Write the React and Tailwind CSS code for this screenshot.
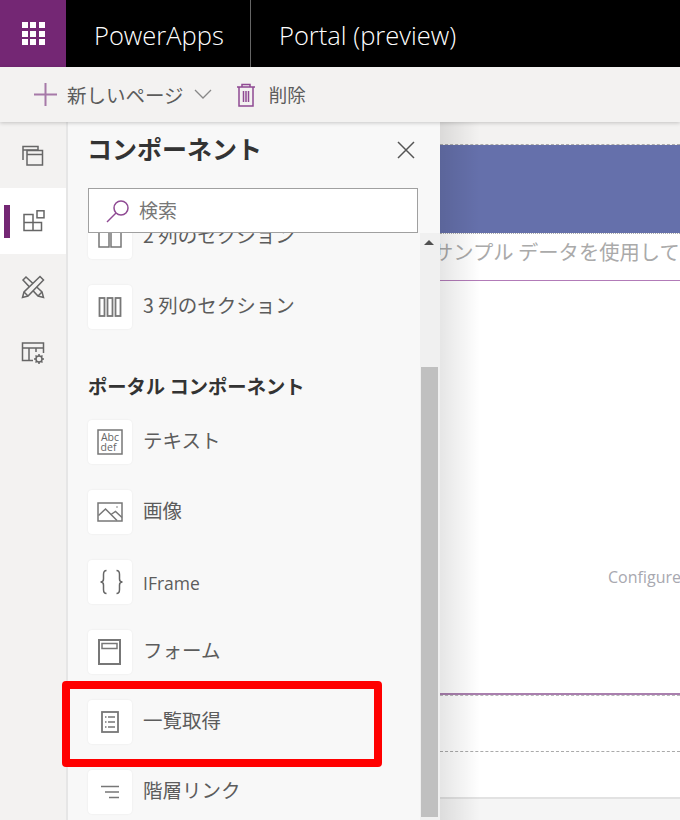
import React from "react";

const jp = "font-['Noto_Sans_CJK_JP','Noto_Sans',sans-serif]";

function TwoColIcon() {
  return (
    <svg width="26" height="26" viewBox="0 0 26 26" fill="none" stroke="#777" strokeWidth="1.500">
      <rect x="2" y="3" width="10" height="20" />
      <rect x="14" y="3" width="10" height="20" />
    </svg>
  );
}

function ThreeColIcon() {
  return (
    <svg width="26" height="26" viewBox="0 0 26 26" fill="none" stroke="#777" strokeWidth="1.800">
      <rect x="2.500" y="4" width="5" height="18" />
      <rect x="10.500" y="4" width="5" height="18" />
      <rect x="18.500" y="4" width="5" height="18" />
    </svg>
  );
}

function TextIcon() {
  return (
    <svg width="26" height="26" viewBox="0 0 26 26" fill="none">
      <rect x="1" y="1" width="24" height="24" stroke="#777" strokeWidth="1.500" />
      <text x="13" y="11.500" textAnchor="middle" fontSize="10.500" fill="#666" fontFamily="Open Sans, sans-serif">Abc</text>
      <text x="11.500" y="21.500" textAnchor="middle" fontSize="10.500" fill="#666" fontFamily="Open Sans, sans-serif">def</text>
    </svg>
  );
}

function ImageIcon() {
  return (
    <svg width="26" height="26" viewBox="0 0 26 26" fill="none" stroke="#777" strokeWidth="1.500">
      <rect x="1" y="4" width="24" height="18" />
      <path d="M1.500 16.500 L8.500 10 L20 21.500" />
      <path d="M14 15.500 L18.500 12.500 L25 18.500" />
      <circle cx="20" cy="8" r="0.800" fill="#777" stroke="none" />
    </svg>
  );
}

function BracesIcon() {
  return (
    <svg className="ml-1" width="26" height="26" viewBox="0 0 26 26" fill="none" stroke="#666" strokeWidth="1.500">
      <path d="M7.500 1.500C5 1.500 4.500 3 4.500 5.500V10C4.500 12 3.500 13 1.500 13C3.500 13 4.500 14 4.500 16V20.500C4.500 23 5 24.500 7.500 24.500" />
      <path d="M17.500 1.500C20 1.500 20.500 3 20.500 5.500V10C20.500 12 21.500 13 23.500 13C21.500 13 20.500 14 20.500 16V20.500C20.500 23 20 24.500 17.500 24.500" />
    </svg>
  );
}

function FormIcon() {
  return (
    <svg width="26" height="26" viewBox="0 0 26 26" fill="none" stroke="#777" strokeWidth="1.500">
      <rect x="2" y="1" width="21" height="24" strokeWidth="2" />
      <rect x="5" y="4.500" width="15" height="5" />
    </svg>
  );
}

function ListIcon() {
  return (
    <svg width="26" height="26" viewBox="0 0 26 26" fill="none" stroke="#777" strokeWidth="1.500">
      <rect x="5" y="3" width="16" height="20" strokeWidth="1.800" />
      <path d="M8 8h1.500M11 8h7M8 13h1.500M11 13h7M8 18h1.500M11 18h7" />
    </svg>
  );
}

function BreadcrumbIcon() {
  return (
    <svg width="26" height="26" viewBox="0 0 26 26" fill="none" stroke="#777" strokeWidth="1.500">
      <path d="M4 7.500h18M8 13h14M12 18.500h10" />
    </svg>
  );
}

function Item({ icon, label, className = "" }) {
  return (
    <div className={`flex items-center gap-[11px] h-11 mb-[26px] ${className}`}>
      <div className="w-11 h-11 rounded bg-white shadow-[0_0_2px_rgba(0,0,0,0.08)] flex items-center justify-center shrink-0">
        {icon}
      </div>
      <span className="text-[19.500px] leading-none pb-1 text-[#5c5c5c] whitespace-nowrap">{label}</span>
    </div>
  );
}

function Rail() {
  return (
    <div className="w-[68px] shrink-0 bg-[#f3f2f1] border-r-2 border-[#e6e6e6] flex flex-col">
      <div className="h-[66px] flex items-center justify-center pt-0.5">
        <svg width="22" height="22" viewBox="0 0 22 22" fill="none" stroke="#666" strokeWidth="1.500">
          <path d="M1 15V1.500h15V5" />
          <path d="M1 5h15" />
          <rect x="5" y="5.500" width="15.500" height="14.500" />
          <path d="M5 9.500h15.500" />
        </svg>
      </div>
      <div className="h-[66px] w-[66px] bg-white flex items-center">
        <div className="w-1.5 h-[33px] ml-1 bg-[#742774]" />
        <div className="flex-1 flex items-center justify-center pr-2">
          <svg width="22" height="22" viewBox="0 0 22 22" fill="none" stroke="#666" strokeWidth="1.500">
            <path d="M1 4.500h9v16H1zM1 12.500h17.500v8H10" />
            <rect x="14" y="0.800" width="7" height="7" />
          </svg>
        </div>
      </div>
      <div className="h-[66px] w-[66px] flex items-center justify-center">
        <svg width="24" height="24" viewBox="0 0 24 24" fill="none" stroke="#666" strokeWidth="1.500">
          <path d="M2 5 L5 2 L21 17 L22.500 22.500 L17 21 Z" />
          <path d="M19 1.500 L22.500 5 L7 21 L1.500 22.500 L3 17 Z" fill="#f3f2f1" />
          <path d="M3 17 L7 21 M17 21 L21 17" />
        </svg>
      </div>
      <div className="h-[66px] w-[66px] flex items-center justify-center">
        <svg width="24" height="24" viewBox="0 0 24 24" fill="none" stroke="#666" strokeWidth="1.500">
          <path d="M12 19.500H1.500V2h21v10" />
          <path d="M1.500 7h21M8 7v12.500M15 7v4" />
          <circle cx="18" cy="18" r="3" />
          <path d="M18 13v2M18 21v2M13 18h2M21 18h2M14.500 14.500l1.300 1.300M20.200 20.200l1.300 1.300M14.500 21.500l1.300-1.300M20.200 15.800l1.300-1.300" />
        </svg>
      </div>
    </div>
  );
}

function Panel() {
  return (
    <div className="w-[372px] shrink-0 bg-[#f8f8f8] flex flex-col relative">
      <div className="h-[66px] pl-5 pr-[25px] flex items-center justify-between">
        <h2 className="text-[25px] font-bold text-[#333] leading-none -mt-[13px] -ml-px">コンポーネント</h2>
        <svg className="-mt-[11px]" width="18" height="18" viewBox="0 0 18 18" stroke="#555" strokeWidth="1.500">
          <path d="M1 1l16 16M17 1L1 17" />
        </svg>
      </div>
      <div className="ml-5 w-[330px] h-[45px] shrink-0 border border-[#a0a0a0] bg-white flex items-center pl-[17px] gap-[9px] z-10">
        <svg width="24" height="24" viewBox="0 0 24 24" fill="none" stroke="#8f4a93" strokeWidth="1.500">
          <circle cx="15" cy="9" r="7" />
          <path d="M10 14 L1 23" />
        </svg>
        <span className="text-[19px] leading-none pb-0.5 text-[#777]">検索</span>
      </div>
      <div className="flex-1 flex min-h-0 overflow-hidden">
        <div className="flex-1 pl-5 -mt-[18px] overflow-hidden">
          <Item icon={<TwoColIcon />} label="2 列のセクション" />
          <Item icon={<ThreeColIcon />} label="3 列のセクション" className="mb-0" />
          <h3 className="mt-[44px] mb-[19px] h-7 flex items-center text-[19.300px] font-bold text-[#333] leading-none whitespace-nowrap">
            ポータル コンポーネント
          </h3>
          <Item icon={<TextIcon />} label="テキスト" />
          <Item icon={<ImageIcon />} label="画像" />
          <Item
            icon={<BracesIcon />}
            label={<span className="block pt-2 font-['Open_Sans',sans-serif] text-[17.500px]">IFrame</span>}
          />
          <Item icon={<FormIcon />} label="フォーム" />
          <Item icon={<ListIcon />} label="一覧取得" />
          <Item icon={<BreadcrumbIcon />} label="階層リンク" />
        </div>
        <div className="w-5 shrink-0 bg-[#f0f0f0] flex flex-col items-center">
          <div className="h-[134px] shrink-0 pt-[7px] pr-0.5">
            <div className="w-0 h-0 border-x-[5px] border-x-transparent border-b-[5px] border-b-[#505050]" />
          </div>
          <div className="w-[17px] h-[450px] shrink-0 bg-[#c0c0c0] mr-0.5" />
        </div>
      </div>
    </div>
  );
}

function Canvas() {
  return (
    <div className="flex-1 min-w-0 relative overflow-hidden flex flex-col bg-white">
      <div className="h-[23px] shrink-0 bg-[#f3f2f1] border-b border-dashed border-[#aaa]" />
      <div className="h-[88px] shrink-0 bg-[#6570ab]" />
      <div className="h-[47px] shrink-0 border-t border-dotted border-t-[#aaa] flex items-center overflow-hidden">
        <span className="-ml-[7px] pb-3 text-[20.300px] leading-none text-[#aaa] whitespace-nowrap">サンプル データを使用してください</span>
      </div>
      <div className="h-px shrink-0 bg-[#b27bb8]" />
      <div className="h-[412px] shrink-0 flex items-start pt-[288px] overflow-hidden">
        <span className="ml-[168px] text-[16px] leading-none text-[#a8a8b0] font-['Open_Sans',sans-serif] whitespace-nowrap">Configure this component</span>
      </div>
      <div className="h-[2px] shrink-0 bg-[#a97fae]" />
      <div className="h-[57px] shrink-0 border-t border-dashed border-t-[#bbb] border-b border-b-[#aaa]" />
      <div className="h-[47px] shrink-0 bg-white border-b-2 border-[#e2e2e2]" />
      <div className="flex-1 bg-[#f5f5f5]" />
      <div className="absolute left-0 top-0 bottom-0 w-10 bg-gradient-to-r from-black/10 to-transparent" />
    </div>
  );
}

export default function App() {
  return (
    <div className={`w-[680px] h-[820px] overflow-hidden flex flex-col relative ${jp}`}>
      <div className="h-[67px] shrink-0 bg-black flex items-center text-white">
        <div className="w-[66px] h-full bg-[#742774] flex items-center justify-center">
          <div className="grid grid-cols-3 gap-[2.500px]">
            {Array.from({ length: 9 }).map((_, i) => (
              <div key={i} className="w-[6px] h-[6px] bg-white" />
            ))}
          </div>
        </div>
        <div className="w-[185px] h-full pl-7 pt-1 border-r border-[#666] flex items-center">
          <span className="text-[25.500px] leading-none font-['Open_Sans',sans-serif] font-light">PowerApps</span>
        </div>
        <span className="pl-7 pt-1 text-[25.500px] leading-none font-['Open_Sans',sans-serif] font-light">Portal (preview)</span>
      </div>
      <div className="h-[55px] shrink-0 bg-[#f3f2f1] shadow-[0_1px_4px_rgba(0,0,0,0.2)] z-20 flex items-center pl-[34px] text-[#5c5c5c]">
        <svg width="23" height="23" viewBox="0 0 23 23" stroke="#a679a8" strokeWidth="2">
          <path d="M11.500 0v23M0 11.500h23" />
        </svg>
        <span className="ml-[10px] text-[19.500px] leading-none">新しいページ</span>
        <svg className="ml-[10px] -mt-0.5" width="18" height="10" viewBox="0 0 18 10" fill="none" stroke="#888" strokeWidth="1.300">
          <path d="M1 1l8 8 8-8" />
        </svg>
        <svg className="ml-6" width="20" height="24" viewBox="0 0 20 24" fill="none" stroke="#8f4a93" strokeWidth="1.500">
          <path d="M1 4h18M6 4V1.500h8V4M3 4v19h14V4M7.500 8v11M10 8v11M12.500 8v11" />
        </svg>
        <span className="ml-[13px] text-[18.500px] leading-none">削除</span>
      </div>
      <div className="flex-1 min-h-0 flex">
        <Rail />
        <Panel />
        <Canvas />
      </div>
      {/* red highlight around the list item */}
      <div className="absolute left-[62px] top-[681px] w-[320px] h-[86px] border-8 border-[#ff0000] rounded z-30" />
    </div>
  );
}
